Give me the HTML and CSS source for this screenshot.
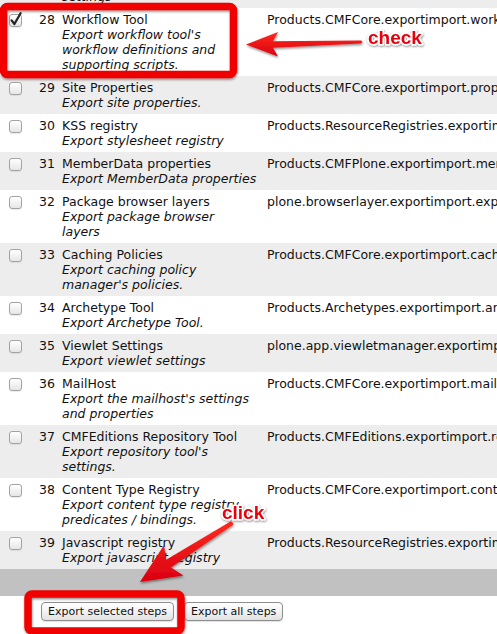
FILE: index.html
```html
<!DOCTYPE html>
<html lang="en">
<head>
<meta charset="utf-8">
<title>Export steps</title>
<link rel="stylesheet" href="styles.css">
</head>
<body>
<div class="page">
  <div class="steps">
    <div class="row odd">
      <span class="cb"></span>
      <span class="num">27</span>
      <div class="info"><div class="title">Plone Properties</div><div class="desc">Export Plone properties tool<br>settings</div></div>
      <span class="path">Products.CMFPlone.exportimport.propertiestool.exportPropertiesTool</span>
    </div>
    <div class="row">
      <span class="cb checked"><svg width="13" height="13" viewBox="0 0 13 13"><path d="M2.6 6.4 L5.4 10 L11.6 -0.8" fill="none" stroke="#262626" stroke-width="2.3" stroke-linecap="round" stroke-linejoin="round"/></svg></span>
      <span class="num">28</span>
      <div class="info"><div class="title">Workflow Tool</div><div class="desc">Export workflow tool's<br>workflow definitions and<br>supporting scripts.</div></div>
      <span class="path">Products.CMFCore.exportimport.workflow.exportWorkflowTool</span>
    </div>
    <div class="row odd">
      <span class="cb"></span>
      <span class="num">29</span>
      <div class="info"><div class="title">Site Properties</div><div class="desc">Export site properties.</div></div>
      <span class="path">Products.CMFCore.exportimport.properties.exportSiteProperties</span>
    </div>
    <div class="row">
      <span class="cb"></span>
      <span class="num">30</span>
      <div class="info"><div class="title">KSS registry</div><div class="desc">Export stylesheet registry</div></div>
      <span class="path">Products.ResourceRegistries.exportimport.kssregistry.exportKSSRegistry</span>
    </div>
    <div class="row odd">
      <span class="cb"></span>
      <span class="num">31</span>
      <div class="info"><div class="title">MemberData properties</div><div class="desc">Export MemberData properties</div></div>
      <span class="path">Products.CMFPlone.exportimport.memberdata_properties.exportMemberDataProperties</span>
    </div>
    <div class="row">
      <span class="cb"></span>
      <span class="num">32</span>
      <div class="info"><div class="title">Package browser layers</div><div class="desc">Export package browser<br>layers</div></div>
      <span class="path">plone.browserlayer.exportimport.exportLayers</span>
    </div>
    <div class="row odd">
      <span class="cb"></span>
      <span class="num">33</span>
      <div class="info"><div class="title">Caching Policies</div><div class="desc">Export caching policy<br>manager's policies.</div></div>
      <span class="path">Products.CMFCore.exportimport.cachingpolicymgr.exportCachingPolicyManager</span>
    </div>
    <div class="row">
      <span class="cb"></span>
      <span class="num">34</span>
      <div class="info"><div class="title">Archetype Tool</div><div class="desc">Export Archetype Tool.</div></div>
      <span class="path">Products.Archetypes.exportimport.archetypetool.exportArchetypeTool</span>
    </div>
    <div class="row odd">
      <span class="cb"></span>
      <span class="num">35</span>
      <div class="info"><div class="title">Viewlet Settings</div><div class="desc">Export viewlet settings</div></div>
      <span class="path">plone.app.viewletmanager.exportimport.storage.exportViewletSettingsStorage</span>
    </div>
    <div class="row">
      <span class="cb"></span>
      <span class="num">36</span>
      <div class="info"><div class="title">MailHost</div><div class="desc">Export the mailhost's settings<br>and properties</div></div>
      <span class="path">Products.CMFCore.exportimport.mailhost.exportMailHost</span>
    </div>
    <div class="row odd">
      <span class="cb"></span>
      <span class="num">37</span>
      <div class="info"><div class="title">CMFEditions Repository Tool</div><div class="desc">Export repository tool's<br>settings.</div></div>
      <span class="path">Products.CMFEditions.exportimport.repository.exportRepositoryTool</span>
    </div>
    <div class="row">
      <span class="cb"></span>
      <span class="num">38</span>
      <div class="info"><div class="title">Content Type Registry</div><div class="desc">Export content type registry<br>predicates / bindings.</div></div>
      <span class="path">Products.CMFCore.exportimport.contenttyperegistry.exportContentTypeRegistry</span>
    </div>
    <div class="row odd">
      <span class="cb"></span>
      <span class="num">39</span>
      <div class="info"><div class="title">Javascript registry</div><div class="desc">Export javascript registry</div></div>
      <span class="path">Products.ResourceRegistries.exportimport.jsregistry.exportJSRegistry</span>
    </div>
  </div>
  <div class="footer-bar"></div>
  <div class="actions">
    <button class="btn" type="button">Export selected steps</button>
    <button class="btn" type="button">Export all steps</button>
  </div>

  <svg class="annotations" width="497" height="634" viewBox="0 0 497 634">
    <defs>
      <filter id="shadow" x="-20%" y="-20%" width="140%" height="150%">
        <feDropShadow dx="0.5" dy="1.5" stdDeviation="1.2" flood-color="#000" flood-opacity="0.45"/>
      </filter>
      <filter id="tshadow" x="-20%" y="-30%" width="140%" height="170%">
        <feDropShadow dx="0.5" dy="1" stdDeviation="1" flood-color="#000" flood-opacity="0.5"/>
      </filter>
      <linearGradient id="red" x1="0" y1="0" x2="0" y2="1">
        <stop offset="0" stop-color="#ff2a1e"/>
        <stop offset="1" stop-color="#d90010"/>
      </linearGradient>
    </defs>
    <rect class="box" x="3.5" y="6.5" width="230" height="68" rx="4"/>
    <rect class="box" x="28" y="594" width="153" height="37" rx="4"/>
    <polygon class="arrow" points="246,44.5 278,32 273,41.2 361,40.4 362.5,42 361,43.6 273,47.8 278,56.5"/>
    <polygon class="arrow" points="140,582 163.96,545.26 166.2,559.8 230.9,521.3 232.8,522.5 233.1,524.7 171,567.4 183.4,575.6"/>
    <text class="label" x="368" y="44">check</text>
    <text class="label" x="222" y="519">click</text>
  </svg>
</div>
</body>
</html>
```
FILE: styles.css
```css
html, body {
  margin: 0;
  padding: 0;
  background: #fff;
  overflow: hidden;
}

.page {
  position: relative;
  width: 497px;
  height: 634px;
  overflow: hidden;
  font-family: "DejaVu Sans", Verdana, sans-serif;
  font-size: 12.5px;
  line-height: 15px;
  color: #111;
}

.steps {
  margin-top: -45px;
}

.row {
  display: grid;
  grid-template-columns: 13px 33px 212px max-content;
  align-items: start;
  padding: 4px 0 4px 9px;
  background: #fff;
}

.row.odd {
  background: #ededed;
}

.cb {
  display: block;
  box-sizing: border-box;
  width: 13px;
  height: 13px;
  margin-top: 2px;
  border: 1px solid #a3a3a3;
  border-radius: 3px;
  background: linear-gradient(#ffffff, #e6e6e6);
  box-shadow: 0 1px 1px rgba(0, 0, 0, 0.08);
}

.cb svg {
  display: block;
  margin: -1px 0 0 -1px;
  overflow: visible;
}

.num {
  text-align: right;
}

.info {
  padding-left: 7px;
}

.desc {
  font-style: italic;
  white-space: nowrap;
}

.title {
  white-space: nowrap;
}

.path {
  white-space: nowrap;
}

.footer-bar {
  height: 27px;
  background: #c1c1c1;
}

.actions {
  display: flex;
  gap: 10px;
  padding: 6px 0 0 41px;
}

.btn {
  box-sizing: border-box;
  height: 19px;
  padding: 0 6px;
  font-family: "DejaVu Sans", Verdana, sans-serif;
  font-size: 11px;
  line-height: 17px;
  color: #111;
  border: 1px solid #8e8e8e;
  border-radius: 4px;
  background: linear-gradient(#ffffff, #f3f3f3 50%, #e1e1e1);
  box-shadow: 0 1px 1px rgba(0, 0, 0, 0.12);
}

.annotations {
  position: absolute;
  top: 0;
  left: 0;
  pointer-events: none;
}

.annotations .box {
  fill: none;
  stroke: #f10000;
  stroke-width: 7.5;
  filter: url(#shadow);
}

.annotations .arrow {
  fill: url(#red);
  filter: url(#shadow);
}

.annotations .label {
  font-family: "Liberation Sans", Arial, sans-serif;
  font-weight: bold;
  font-size: 19px;
  fill: #e8000b;
  stroke: #fff;
  stroke-width: 3px;
  paint-order: stroke;
  stroke-linejoin: round;
  filter: url(#tshadow);
}
```
